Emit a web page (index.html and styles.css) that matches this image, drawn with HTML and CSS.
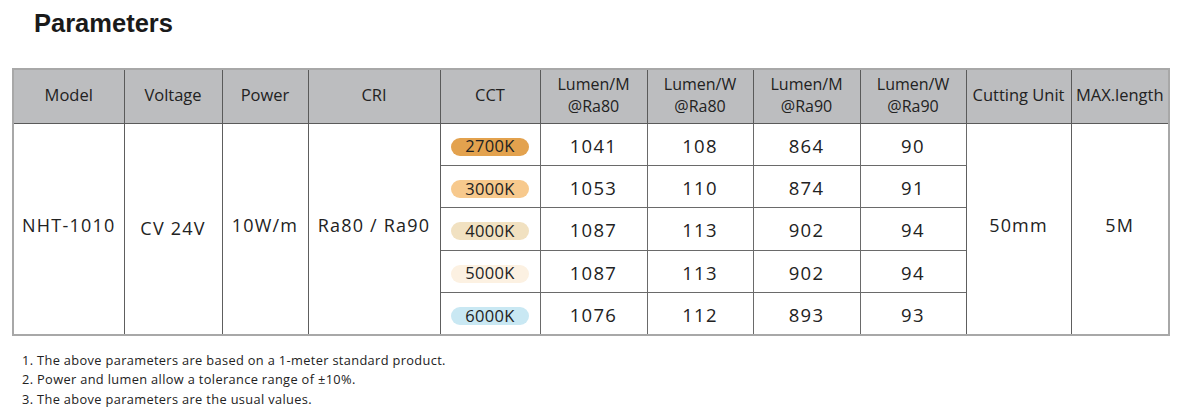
FILE: index.html
```html
<!DOCTYPE html>
<html>
<head>
<meta charset="utf-8">
<link rel="stylesheet" href="styles.css">
</head>
<body>
<h1 class="title">Parameters</h1>
<table class="params">
  <colgroup>
    <col class="c-model"><col class="c-volt"><col class="c-power"><col class="c-cri"><col class="c-cct">
    <col class="c-l1"><col class="c-l2"><col class="c-l3"><col class="c-l4"><col class="c-cut"><col class="c-max">
  </colgroup>
  <thead>
    <tr>
      <th>Model</th><th>Voltage</th><th>Power</th><th>CRI</th><th>CCT</th>
      <th class="two">Lumen/M<br>@Ra80</th><th class="two">Lumen/W<br>@Ra80</th>
      <th class="two">Lumen/M<br>@Ra90</th><th class="two">Lumen/W<br>@Ra90</th>
      <th>Cutting Unit</th><th>MAX.length</th>
    </tr>
  </thead>
  <tbody>
    <tr>
      <td rowspan="5" class="merged">NHT-1010</td>
      <td rowspan="5" class="merged low">CV 24V</td>
      <td rowspan="5" class="merged">10W/m</td>
      <td rowspan="5" class="merged">Ra80 / Ra90</td>
      <td><span class="pill k2700">2700K</span></td>
      <td class="num">1041</td><td class="num">108</td><td class="num">864</td><td class="num">90</td>
      <td rowspan="5" class="merged">50mm</td>
      <td rowspan="5" class="merged">5M</td>
    </tr>
    <tr>
      <td><span class="pill k3000">3000K</span></td>
      <td class="num">1053</td><td class="num">110</td><td class="num">874</td><td class="num">91</td>
    </tr>
    <tr>
      <td><span class="pill k4000">4000K</span></td>
      <td class="num">1087</td><td class="num">113</td><td class="num">902</td><td class="num">94</td>
    </tr>
    <tr>
      <td><span class="pill k5000">5000K</span></td>
      <td class="num">1087</td><td class="num">113</td><td class="num">902</td><td class="num">94</td>
    </tr>
    <tr>
      <td><span class="pill k6000">6000K</span></td>
      <td class="num">1076</td><td class="num">112</td><td class="num">893</td><td class="num">93</td>
    </tr>
  </tbody>
</table>
<ol class="notes">
  <li>1. The above parameters are based on a 1-meter standard product.</li>
  <li>2. Power and lumen allow a tolerance range of ±10%.</li>
  <li>3. The above parameters are the usual values.</li>
</ol>
</body>
</html>
```

FILE: styles.css
```css
* { box-sizing: border-box; }
html, body { margin: 0; padding: 0; background: #fff; }
body {
  font-family: "Open Sans", "Noto Sans", sans-serif;
  color: #222;
  padding: 0 0 0 12px;
}
.title {
  font-family: "Liberation Sans", Arial, sans-serif;
  font-weight: 700;
  font-size: 25.5px;
  margin: 0;
  padding: 7px 0 0 22px;
  line-height: 32px;
  color: #1a1a1a;
}
.params {
  margin-top: 29px;
  border-collapse: collapse;
  width: 1156px;
  table-layout: fixed;
  border: 2px solid #a8a8a8;
}
.c-model { width: 111px; }
.c-volt { width: 98px; }
.c-power { width: 86px; }
.c-cri { width: 132px; }
.c-cct { width: 100px; }
.c-l1 { width: 107px; }
.c-l2 { width: 106px; }
.c-l3 { width: 107px; }
.c-l4 { width: 106px; }
.c-cut { width: 105px; }
.c-max { width: 98px; }
.params th {
  background: #bcbdbf;
  font-weight: 400;
  font-size: 16.5px;
  color: #222;
  height: 54px;
  padding: 0 0 4px;
  border: 1px solid #5a5a5a;
  text-align: center;
  vertical-align: middle;
  white-space: nowrap;
}
.params th.two { font-size: 16px; line-height: 22px; padding: 0 0 2px; }
.params td {
  border: 1px solid #6a6a6a;
  height: 42.4px;
  padding: 0;
  text-align: center;
  vertical-align: middle;
  font-size: 17.5px;
  color: #222;
  white-space: nowrap;
}
.params td.merged {
  border-color: #a0a0a0 #5e5e5e;
  font-size: 18px;
  letter-spacing: 1.2px;
  padding-bottom: 8px;
}
.params td.low { padding-bottom: 2px; }
.params td.num { letter-spacing: 1.3px; font-size: 18.5px; padding-top: 2px; }
.pill {
  display: inline-flex;
  align-items: center;
  justify-content: center;
  width: 78px;
  height: 18px;
  border-radius: 9px;
  font-size: 16.5px;
  line-height: 1;
  color: #222;
  letter-spacing: 0.3px;
  vertical-align: middle;
}
.k2700 { background: #e3a24e; }
.k3000 { background: #f7c98d; }
.k4000 { background: #f1e1c1; }
.k5000 { background: #fcf1e2; }
.k6000 { background: #c9e8f3; }
.notes {
  list-style: none;
  margin: 15px 0 0 10px;
  padding: 0;
  font-size: 12.8px;
  letter-spacing: 0.35px;
  line-height: 19.5px;
  color: #222;
}
```
